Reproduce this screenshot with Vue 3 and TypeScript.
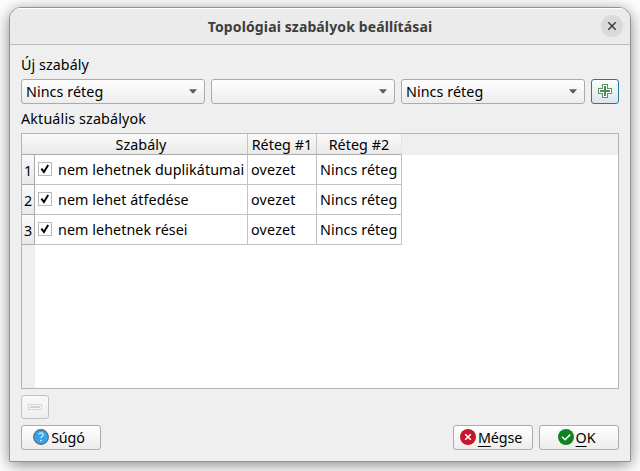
<script setup lang="ts">
import { ref } from 'vue'

interface Rule {
  name: string
  checked: boolean
  layer1: string
  layer2: string
}

const combos = ref<string[]>(['Nincs réteg', '', 'Nincs réteg'])
const rules = ref<Rule[]>([
  { name: 'nem lehetnek duplikátumai', checked: true, layer1: 'ovezet', layer2: 'Nincs réteg' },
  { name: 'nem lehet átfedése', checked: true, layer1: 'ovezet', layer2: 'Nincs réteg' },
  { name: 'nem lehetnek rései', checked: true, layer1: 'ovezet', layer2: 'Nincs réteg' },
])
</script>

<template>
  <div class="desktop">
    <section class="dialog">
      <header class="titlebar">
        <h1>Topológiai szabályok beállításai</h1>
        <button class="close" aria-label="Bezárás">
          <svg width="22" height="22" viewBox="0 0 22 22">
            <path d="M7.3 7.3L14.7 14.7M14.7 7.3L7.3 14.7" stroke="#3d3d3d" stroke-width="1.5" />
          </svg>
        </button>
      </header>
      <main class="content">
        <div class="label first">Új szabály</div>
        <div class="combos">
          <button v-for="(c, i) in combos" :key="i" class="combo">
            <span>{{ c }}</span>
            <svg width="8" height="5" viewBox="0 0 8 5"><path d="M0 .3H8L4.6 4.2H3.4Z" fill="#5c5c5c" /></svg>
          </button>
          <button class="add" aria-label="Hozzáadás">
            <svg width="14" height="14" viewBox="0 0 14 14" shape-rendering="crispEdges">
              <path d="M4 0H10V4H14V10H10V14H4V10H0V4H4Z" fill="#5b9560" />
              <path d="M5 1H9V5H13V9H9V13H5V9H1V5H5Z" fill="#fff" />
              <path d="M6 2H8V6H12V8H8V12H6V8H2V6H6Z" fill="#4f8b50" />
            </svg>
          </button>
        </div>
        <div class="label second">Aktuális szabályok</div>
        <div class="table">
          <div class="row head">
            <div class="h-rule">Szabály</div>
            <div class="h-one">Réteg #1</div>
            <div class="h-two">Réteg #2</div>
          </div>
          <div v-for="(r, i) in rules" :key="i" class="row">
            <div class="num">{{ i + 1 }}</div>
            <div class="cell rule">
              <span class="check">
                <svg v-if="r.checked" width="12" height="12" viewBox="0 0 12 12">
                  <path d="M2.4 5.6L4.9 9L9.2 2" fill="none" stroke="#000" stroke-width="1.9" />
                </svg>
              </span>
              <span>{{ r.name }}</span>
            </div>
            <div class="cell one">{{ r.layer1 }}</div>
            <div class="cell two">{{ r.layer2 }}</div>
          </div>
          <div class="gutter"></div>
        </div>
        <button class="remove" aria-label="Eltávolítás">
          <svg width="14" height="6" viewBox="0 0 14 6" shape-rendering="crispEdges">
            <path d="M0 0H14V6H0Z" fill="#ddd5d4" />
            <path d="M1 1H13V5H1Z" fill="#f7f5f5" />
            <path d="M2 2H12V4H2Z" fill="#d9d0cf" />
          </svg>
        </button>
        <footer class="actions">
          <button class="action help">
            <svg width="16" height="16" viewBox="0 0 16 16">
              <circle cx="8" cy="8" r="7.4" fill="#36a3e8" stroke="#5d6b75" stroke-width="1.1" />
              <path d="M5.8 5.4Q6.4 3.8 8.1 3.8Q10.3 3.9 10.2 5.7Q10.1 6.8 8.9 7.5Q8 8.1 8 9.3" fill="none" stroke="#d5efff" stroke-width="1.2" />
              <circle cx="8" cy="11.7" r=".9" fill="#d5efff" />
            </svg>
            <span>Súgó</span>
          </button>
          <button class="action cancel">
            <svg width="16" height="16" viewBox="0 0 16 16">
              <circle cx="8" cy="8" r="8" fill="#c7162b" />
              <path d="M5.2 5.2L10.8 10.8M10.8 5.2L5.2 10.8" stroke="#fff" stroke-width="1.6" />
            </svg>
            <span><u>M</u>égse</span>
          </button>
          <button class="action ok">
            <svg width="16" height="16" viewBox="0 0 16 16">
              <circle cx="8" cy="8" r="8" fill="#0e8420" />
              <path d="M4 7.8L7.1 10.8L12.2 5.6" fill="none" stroke="#fff" stroke-width="1.5" />
            </svg>
            <span><u>O</u>K</span>
          </button>
        </footer>
      </main>
    </section>
  </div>
</template>

<style>
body {
  background: #fff;
  overflow: hidden;
}
</style>

<style scoped>
.desktop {
  box-sizing: border-box;
  width: 640px;
  height: 471px;
  padding: 7px 9px 9px;
  overflow: hidden;
  font-family: 'Noto Sans', 'Open Sans', sans-serif;
  font-size: 14.3px;
  line-height: 20px;
  letter-spacing: 0.07px;
  color: #000;
}
.dialog {
  box-sizing: border-box;
  width: 622px;
  height: 455px;
  border: 1px solid #929292;
  border-radius: 12px 12px 0 0;
  background: #efefef;
  box-shadow: 0 3px 16px rgba(0, 0, 0, 0.48);
  overflow: hidden;
}
.titlebar {
  box-sizing: border-box;
  position: relative;
  height: 37px;
  border-top: 1px solid #fff;
  border-bottom: 1px solid #bcbcbc;
  background: #ebebeb;
  display: flex;
  justify-content: center;
}
h1 {
  margin: 8px 0 0;
  font-size: 14px;
  line-height: 20px;
  font-weight: 700;
  color: #3d3d3d;
  white-space: nowrap;
  letter-spacing: 0.12px;
}
button {
  box-sizing: border-box;
  margin: 0;
  padding: 0;
  font: inherit;
  color: inherit;
  letter-spacing: inherit;
  border: 1px solid #ababab;
  border-radius: 3px;
  background: linear-gradient(#fefefe, #ededed);
  display: flex;
  align-items: center;
}
svg {
  display: block;
  flex: none;
}
.close {
  position: absolute;
  right: 7px;
  top: 6px;
  width: 22px;
  height: 22px;
  border: 0;
  border-radius: 50%;
  background: #dadada;
}
.content {
  padding: 10px 11px 0;
}
.label {
  height: 20px;
  white-space: nowrap;
}
.combos {
  display: flex;
  gap: 6px;
  margin-top: 4px;
}
.combo {
  width: 184px;
  height: 25px;
  padding: 0 7px 0 4px;
  justify-content: space-between;
}
.add {
  width: 28px;
  height: 25px;
  padding-bottom: 1px;
  justify-content: center;
  border-color: #2f73a3;
  background: linear-gradient(#fcfdfd, #dce4e9);
}
.second {
  margin-top: 5px;
  letter-spacing: 0.15px;
}
.table {
  box-sizing: border-box;
  height: 256px;
  margin-top: 4px;
  border: 1px solid #b5b5b5;
  background: #fff;
  display: flex;
  flex-direction: column;
}
.row {
  display: flex;
  height: 30px;
  flex: none;
  white-space: nowrap;
}
.row > div {
  box-sizing: border-box;
  border-right: 1px solid #c3c3c3;
  border-bottom: 1px solid #c3c3c3;
}
.head {
  height: 21px;
  background: #efefef;
}
.head > div {
  background: linear-gradient(#fafafa, #e9e9e9);
  text-align: center;
  line-height: 21px;
  border-bottom-color: #ababab;
}
.head .h-rule {
  width: 226px;
  padding-left: 13px;
}
.h-one {
  width: 69px;
}
.head .h-two {
  width: 85px;
  border-right-color: #e4e4e4;
}
.two {
  width: 85px;
}
.row .num {
  width: 13px;
  background: linear-gradient(#fafafa, #e9e9e9);
  border-color: #ababab;
  text-align: center;
  line-height: 31px;
}
.cell {
  line-height: 30px;
  padding-left: 3px;
}
.rule {
  width: 213px;
  display: flex;
}
.one {
  width: 69px;
  letter-spacing: 0.2px;
}
.check {
  box-sizing: border-box;
  width: 14px;
  height: 14px;
  margin: 7px 6px 0 0;
  border: 1px solid #b9b9b9;
  background: #fff;
  display: flex;
  align-items: center;
  justify-content: center;
}
.gutter {
  flex: 1;
  width: 13px;
  background: #efefef;
}
.remove {
  width: 28px;
  height: 24px;
  margin-top: 6px;
  justify-content: center;
  border-color: #c2c2c2;
  background: linear-gradient(#f8f8f8, #efefef);
}
.actions {
  display: flex;
  gap: 6px;
  margin-top: 6px;
}
.action {
  width: 80px;
  height: 25px;
  padding-right: 4px;
  padding-bottom: 1px;
  justify-content: center;
  gap: 2px;
  letter-spacing: -0.1px;
}
.action span {
  padding-top: 1px;
}
.help {
  margin-right: auto;
}
.ok {
  padding-right: 5px;
}
u {
  text-underline-offset: 3px;
  text-decoration-thickness: 1px;
  text-decoration-skip-ink: none;
}
</style>
